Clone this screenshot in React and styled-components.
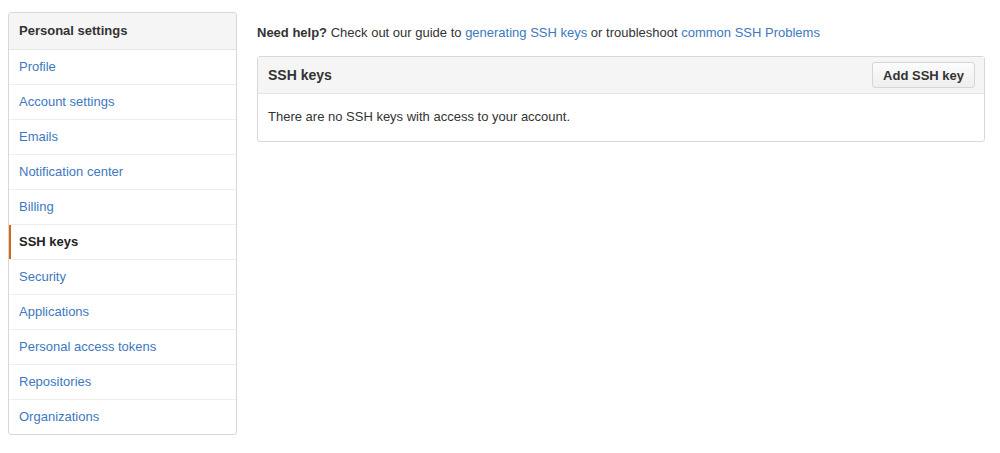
import React from "react";
import styled, { createGlobalStyle } from "styled-components";

const GlobalStyle = createGlobalStyle`
  body {
    margin: 0;
    background: #fff;
    font-family: "Liberation Sans", Arial, sans-serif;
    font-size: 13px;
    color: #333;
  }
`;

const menu = [
  "Profile",
  "Account settings",
  "Emails",
  "Notification center",
  "Billing",
  "SSH keys",
  "Security",
  "Applications",
  "Personal access tokens",
  "Repositories",
  "Organizations",
];

export default function App() {
  return (
    <Page>
      <GlobalStyle />
      <Sidebar>
        <MenuHeading>Personal settings</MenuHeading>
        {menu.map((item) => (
          <MenuItem key={item} $selected={item === "SSH keys"}>
            {item}
          </MenuItem>
        ))}
      </Sidebar>
      <Main>
        <Help>
          <strong>Need help?</strong> Check out our guide to{" "}
          <Link>generating SSH keys</Link> or troubleshoot{" "}
          <Link>common SSH Problems</Link>
        </Help>
        <Box>
          <BoxHeader>
            <BoxTitle>SSH keys</BoxTitle>
            <Button>Add SSH key</Button>
          </BoxHeader>
          <BoxBody>There are no SSH keys with access to your account.</BoxBody>
        </Box>
      </Main>
    </Page>
  );
}

const Page = styled.div`
  display: flex;
  gap: 20px;
  padding: 12px 15px 0 8px;
`;

const Sidebar = styled.nav`
  width: 229px;
  flex-shrink: 0;
  border: 1px solid #d8d8d8;
  border-radius: 3px;
  overflow: hidden;
  box-sizing: border-box;
`;

const MenuHeading = styled.div`
  padding: 8px 10px 9px;
  line-height: 19px;
  font-weight: bold;
  background: #f5f5f5;
  border-bottom: 1px solid #e5e5e5;
`;

const MenuItem = styled.a`
  display: block;
  padding: 8px 10px;
  line-height: 18px;
  border-bottom: 1px solid #eee;
  color: ${(p) => (p.$selected ? "#222" : "#4078c0")};
  font-weight: ${(p) => (p.$selected ? "bold" : "normal")};
  box-shadow: ${(p) => (p.$selected ? "inset 2px 0 #d26911" : "none")};
  cursor: pointer;
  &:last-child {
    border-bottom: none;
  }
`;

const Main = styled.main`
  flex: 1;
`;

const Help = styled.p`
  margin: 11px 0 13px;
  line-height: 20px;
  color: #333;
`;

const Link = styled.a`
  color: #4078c0;
  cursor: pointer;
`;

const Box = styled.div`
  border: 1px solid #d8d8d8;
  border-radius: 3px;
`;

const BoxHeader = styled.div`
  display: flex;
  align-items: center;
  justify-content: space-between;
  padding: 5px 9px 5px 10px;
  background: #f5f5f5;
  border-bottom: 1px solid #e5e5e5;
`;

const BoxTitle = styled.h3`
  margin: 0;
  font-size: 14px;
  font-weight: bold;
  color: #333;
`;

const Button = styled.button`
  height: 26px;
  padding: 0 10px;
  font-family: inherit;
  font-size: 13px;
  font-weight: bold;
  color: #333;
  background: linear-gradient(#fcfcfc, #eee);
  border: 1px solid #d5d5d5;
  border-radius: 3px;
  cursor: pointer;
`;

const BoxBody = styled.div`
  padding: 14px 10px 16px;
  line-height: 17px;
  color: #333;
`;
